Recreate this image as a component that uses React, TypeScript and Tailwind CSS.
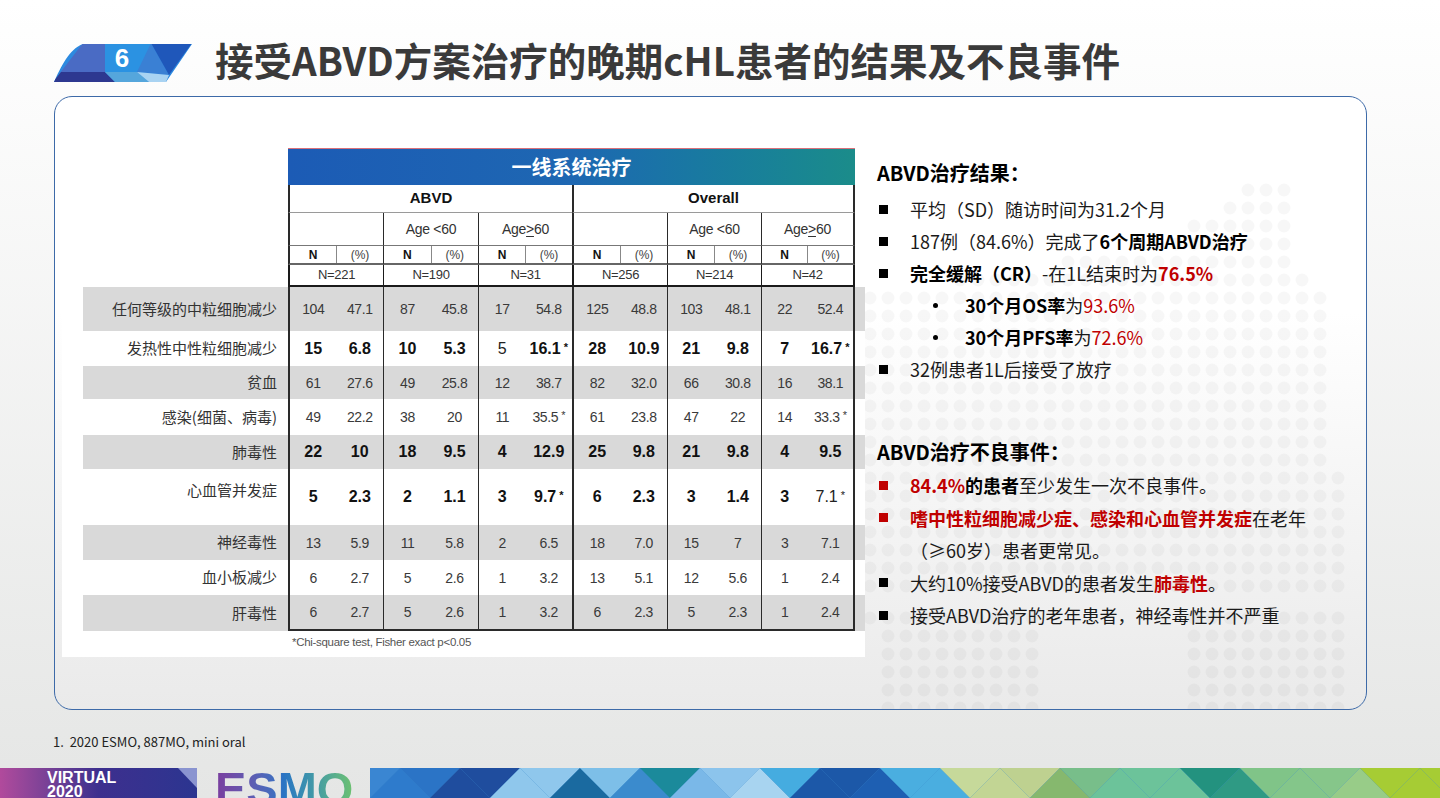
import React from 'react';

type Row = {
  label: string;
  gray: boolean;
  bold: boolean;
  h: string;
  top?: boolean;
  v: [string, string][];
};

const cjk = "font-['Noto_Sans_CJK_SC',sans-serif]";
const arial = "font-['Liberation_Sans',Arial,sans-serif]";

const rows: Row[] = [
  { label: '任何等级的中粒细胞减少', gray: true, bold: false, h: 'h-[44px]', v: [['104', '47.1'], ['87', '45.8'], ['17', '54.8'], ['125', '48.8'], ['103', '48.1'], ['22', '52.4']] },
  { label: '发热性中性粒细胞减少', gray: false, bold: true, h: 'h-[35px]', v: [['15', '6.8'], ['10', '5.3'], ['!5', '16.1*'], ['28', '10.9'], ['21', '9.8'], ['7', '16.7*']] },
  { label: '贫血', gray: true, bold: false, h: 'h-[33px]', v: [['61', '27.6'], ['49', '25.8'], ['12', '38.7'], ['82', '32.0'], ['66', '30.8'], ['16', '38.1']] },
  { label: '感染(细菌、病毒)', gray: false, bold: false, h: 'h-[36px]', v: [['49', '22.2'], ['38', '20'], ['11', '35.5*'], ['61', '23.8'], ['47', '22'], ['14', '33.3*']] },
  { label: '肺毒性', gray: true, bold: true, h: 'h-[34px]', v: [['22', '10'], ['18', '9.5'], ['4', '12.9'], ['25', '9.8'], ['21', '9.8'], ['4', '9.5']] },
  { label: '心血管并发症', gray: false, bold: true, h: 'h-[56px]', top: true, v: [['5', '2.3'], ['2', '1.1'], ['3', '9.7*'], ['6', '2.3'], ['3', '1.4'], ['3', '!7.1*']] },
  { label: '神经毒性', gray: true, bold: false, h: 'h-[35px]', v: [['13', '5.9'], ['11', '5.8'], ['2', '6.5'], ['18', '7.0'], ['15', '7'], ['3', '7.1']] },
  { label: '血小板减少', gray: false, bold: false, h: 'h-[35px]', v: [['6', '2.7'], ['5', '2.6'], ['1', '3.2'], ['13', '5.1'], ['12', '5.6'], ['1', '2.4']] },
  { label: '肝毒性', gray: true, bold: false, h: 'h-[36px]', v: [['6', '2.7'], ['5', '2.6'], ['1', '3.2'], ['6', '2.3'], ['5', '2.3'], ['1', '2.4']] },
];

// widths of the six sub-groups, with their left / right rules
const subW = [
  'w-[95px] border-l-2',
  'w-[95px] border-l',
  'w-[94px] border-l',
  'w-[95px] border-l-2',
  'w-[94px] border-l',
  'w-[94px] border-l border-r-2',
];

const nLabels = ['N=221', 'N=190', 'N=31', 'N=256', 'N=214', 'N=42'];

const stripeColors = [
  '#3a86d2', '#2e7bcc', '#2b74c6', '#1f4d9e', '#1f4d9e', '#8fc7ec', '#8fc7ec', '#1a6aa0',
  '#7dbfe8', '#3b8bcd', '#1b8a9b', '#7ab8e8', '#8cc4ec', '#a8d4f0', '#45ace0', '#1c58a8',
  '#1c58a8', '#1e5fb2', '#4aaee0', '#4aaee0', '#c6d99a', '#c2d594', '#bed190', '#86b86e',
  '#78be8a', '#6cc39a', '#6cc39a', '#6cc39a', '#23927f', '#2f9a84', '#80c488', '#84c68a',
  '#86c68a', '#98cc88', '#a6cc34', '#a6cc34', '#a6cc34', '#a6cc34',
];

function dotRanges(): [number, [number, number][]][] {
  const out: [number, [number, number][]][] = [
    [190, [[1240, 1290]]],
    [208, [[1222, 1290]]],
    [226, [[1186, 1290]]],
    [244, [[1150, 1300]]],
    [262, [[1060, 1300]]],
    [280, [[960, 1305]]],
  ];
  for (let y = 298; y <= 460; y += 18) out.push([y, [[866, 1325]]]);
  for (let y = 478; y <= 600; y += 18) out.push([y, [[866, 1345]]]);
  out.push([618, [[866, 1040], [1180, 1345]]]);
  for (let y = 636; y <= 708; y += 18) out.push([y, [[886, 1040], [1190, 1340]]]);
  return out;
}

function Dots() {
  const circles: React.ReactNode[] = [];
  dotRanges().forEach(([y, ranges]) => {
    ranges.forEach(([a, b]) => {
      for (let x = 870; x <= 1360; x += 18) {
        if (x >= a && x <= b) circles.push(<circle key={`${x}-${y}`} cx={x} cy={y} r={6.5} />);
      }
    });
  });
  return (
    <svg className="pointer-events-none absolute inset-0 h-full w-full">
      <g transform="translate(-55 -97)" fill="#000" fillOpacity={0.032}>
        {circles}
      </g>
    </svg>
  );
}

function Badge() {
  return (
    <div className="relative h-[39px] w-[140px] shrink-0">
      <svg width="140" height="39" viewBox="0 0 140 39">
        <defs>
          <clipPath id="badge">
            <path d="M1 39 C8 24 16 6 30 1 L139 1 L113 39 Z" />
          </clipPath>
        </defs>
        <g clipPath="url(#badge)">
          <rect width="140" height="39" fill="#2d8ae0" />
          <polygon points="0,39 30,0 62,0 52,29 8,29" fill="#4a6bc4" />
          <polygon points="0,39 8,29 52,29 62,39" fill="#2d3890" />
          <polygon points="52,0 100,0 84,29 52,29" fill="#2b92e2" />
          <polygon points="52,29 84,29 96,39 62,39" fill="#55a6dc" />
          <polygon points="98,0 116,32 84,29" fill="#3a80d4" />
          <polygon points="98,0 139,0 116,32" fill="#1f57ba" />
          <polygon points="84,29 116,32 113,39 96,39" fill="#a9d3f2" />
        </g>
      </svg>
      <span className={`absolute left-[56px] top-0 h-[30px] w-[26px] text-center text-[26px] font-bold leading-[30px] text-white ${arial}`}>
        6
      </span>
    </div>
  );
}

function Val({ s, bold }: { s: string; bold: boolean }) {
  const light = s.startsWith('!');
  const t = s.replace('!', '');
  const star = t.endsWith('*');
  const num = star ? t.slice(0, -1) : t;
  const cls = bold
    ? light
      ? 'text-[16px] text-[#222]'
      : 'text-[16px] font-bold text-[#111]'
    : 'text-[14px] tracking-[-0.4px] text-[#3a3a3a]';
  return (
    <span className={cls}>
      {num}
      {star && <span className="ml-[3px] align-[3px] text-[11px]">*</span>}
    </span>
  );
}

function AgeGe() {
  return (
    <>
      {'Age '}
      <span className="underline underline-offset-[2px]">&gt;</span>
      {'60'}
    </>
  );
}

function ResultTable() {
  return (
    <div className="relative ml-[7px] mt-[43px] h-[517px] w-[803px] shrink-0 bg-white pt-[8px]">
      <div className={`ml-[21px] ${arial}`}>
        {/* title bar */}
        <div
          className={`ml-[205px] flex h-[37px] w-[567px] items-center justify-center border-t border-[#d9707a] bg-linear-to-r from-[#1c5bb5] via-[#1e67b2] to-[#1b8c8a] text-[20px] font-bold text-white ${cjk}`}
        >
          一线系统治疗
        </div>

        {/* ABVD / Overall */}
        <div className="flex h-[28px]">
          <div className="w-[205px]" />
          <div className="flex w-[284px] items-center justify-center border-b border-l-2 border-[#2a2a2a] border-b-[#9a9a9a] text-[15px] font-bold text-[#111]">
            ABVD
          </div>
          <div className="flex w-[283px] items-center justify-center border-x-2 border-b border-[#2a2a2a] border-b-[#9a9a9a] text-[15px] font-bold text-[#111]">
            Overall
          </div>
        </div>

        {/* age */}
        <div className="flex h-[33px]">
          <div className="w-[205px]" />
          {subW.map((w, i) => (
            <div
              key={i}
              className={`${w} flex items-center justify-center border-b border-[#2a2a2a] border-b-[#777] text-[14px] tracking-[-0.3px] text-[#333]`}
            >
              {i === 1 || i === 4 ? 'Age <60' : i === 2 || i === 5 ? <AgeGe /> : ''}
            </div>
          ))}
        </div>

        {/* N (%) */}
        <div className="flex h-[19px]">
          <div className="w-[205px]" />
          {subW.map((w, i) => (
            <div key={i} className={`${w} flex border-b-2 border-[#2a2a2a] border-b-[#666]`}>
              <div className="flex flex-1 items-center justify-center text-[12px] font-bold text-[#111]">N</div>
              <div className="flex flex-1 items-center justify-center border-l border-[#888] text-[12px] text-[#444]">(%)</div>
            </div>
          ))}
        </div>

        {/* N= */}
        <div className="flex h-[22px]">
          <div className="w-[205px]" />
          {subW.map((w, i) => (
            <div
              key={i}
              className={`${w} flex items-center justify-center border-b-2 border-[#1a1a1a] text-[13px] tracking-[-0.3px] text-[#333]`}
            >
              {nLabels[i]}
            </div>
          ))}
        </div>

        {/* data */}
        {rows.map((r, ri) => {
          const last = ri === rows.length - 1;
          return (
            <div key={r.label} className={`flex ${r.h} ${r.gray ? 'bg-[#d9d9d9]' : ''}`}>
              <div
                className={`flex w-[205px] justify-end pr-[11px] text-[15px] text-[#333] ${cjk} ${
                  r.top ? 'items-start pt-[10px]' : 'items-center'
                }`}
              >
                {r.label}
              </div>
              {r.v.map((pair, i) => (
                <div
                  key={i}
                  className={`${subW[i]} flex items-center border-[#2a2a2a] ${last ? 'border-b-2' : ''}`}
                >
                  <div className="flex-1 text-center">
                    <Val s={pair[0]} bold={r.bold} />
                  </div>
                  <div className="flex-1 text-center">
                    <Val s={pair[1]} bold={r.bold} />
                  </div>
                </div>
              ))}
            </div>
          );
        })}

        <div className="mt-[3px] pl-[209px] text-[11.5px] leading-[16px] tracking-[-0.3px] text-[#555]">
          *Chi-square test, Fisher exact p&lt;0.05
        </div>
      </div>
    </div>
  );
}

function Bullet({ red, lh, children }: { red?: boolean; lh: string; children: React.ReactNode }) {
  return (
    <li className="flex">
      <span className={`flex w-[33px] shrink-0 items-center ${lh}`}>
        <span className={`ml-[2px] h-[9px] w-[9px] ${red ? 'bg-[#c00000]' : 'bg-black'}`} />
      </span>
      <span>{children}</span>
    </li>
  );
}

function Sub({ children }: { children: React.ReactNode }) {
  return (
    <li className="flex pl-[56px]">
      <span className="flex h-[32px] w-[32px] shrink-0 items-center">
        <span className="h-[5px] w-[5px] rounded-full bg-black" />
      </span>
      <span>{children}</span>
    </li>
  );
}

const B = ({ children }: { children: React.ReactNode }) => <span className="font-bold text-black">{children}</span>;
const Red = ({ children, bold }: { children: React.ReactNode; bold?: boolean }) => (
  <span className={`text-[#c00000] ${bold ? 'font-bold' : ''}`}>{children}</span>
);

function Notes() {
  return (
    <div className="relative ml-[12px] mt-[62px] text-[18px] text-[#1a1a1a]">
      <div className="text-[20px] font-bold leading-[28px] text-black">ABVD治疗结果：</div>
      <ul className="mt-[6px] leading-[32px]">
        <Bullet lh="h-[32px]">平均（SD）随访时间为31.2个月</Bullet>
        <Bullet lh="h-[32px]">
          187例（84.6%）完成了<B>6个周期ABVD治疗</B>
        </Bullet>
        <Bullet lh="h-[32px]">
          <B>完全缓解（CR）</B>-在1L结束时为<Red bold>76.5%</Red>
        </Bullet>
        <Sub>
          <B>30个月OS率</B>为<Red>93.6%</Red>
        </Sub>
        <Sub>
          <B>30个月PFS率</B>为<Red>72.6%</Red>
        </Sub>
        <Bullet lh="h-[32px]">32例患者1L后接受了放疗</Bullet>
      </ul>

      <div className="mt-[53px] text-[20px] font-bold leading-[28px] text-black">ABVD治疗不良事件：</div>
      <ul className="mt-[3px] leading-[32.5px]">
        <Bullet red lh="h-[32.5px]">
          <Red bold>84.4%</Red>
          <B>的患者</B>至少发生一次不良事件。
        </Bullet>
        <Bullet red lh="h-[32.5px]">
          <Red bold>嗜中性粒细胞减少症、感染和心血管并发症</Red>在老年
          <br />
          （≥60岁）患者更常见。
        </Bullet>
        <Bullet lh="h-[32.5px]">
          大约10%接受ABVD的患者发生<Red bold>肺毒性</Red>。
        </Bullet>
        <Bullet lh="h-[32.5px]">接受ABVD治疗的老年患者，神经毒性并不严重</Bullet>
      </ul>
    </div>
  );
}

function Banner() {
  return (
    <div className="flex h-[30px] shrink-0 overflow-hidden">
      <div className="relative w-[197px] shrink-0 bg-linear-to-r from-[#b14a9c] via-[#3d2f8e] to-[#2b3590]">
        <svg className="absolute right-0 top-0" width="20" height="30" viewBox="0 0 20 30">
          <polygon points="1,0 20,0 20,20" fill="#8a94d0" />
        </svg>
        <div className={`pl-[47px] pt-[3px] text-[16px] font-bold leading-[14px] text-white ${arial}`}>
          VIRTUAL
          <br />
          2020
        </div>
      </div>
      <div className="w-[18px] shrink-0" />
      <div
        className={`-mt-[3px] w-[137px] shrink-0 bg-linear-to-r from-[#7a3c9e] via-[#2a74c4] to-[#6cc070] bg-clip-text text-[47px] font-bold leading-none text-transparent ${arial}`}
      >
        ESMO
      </div>
      <div className="w-[18px] shrink-0" />
      <svg className="flex-1" height="30" viewBox="0 0 1070 30" preserveAspectRatio="none">
        <rect width="1070" height="30" fill="#3a8acd" />
        {stripeColors.map((c, i) => {
          const x0 = -30 + i * 30;
          const pts =
            i % 2 === 0
              ? `${x0},0 ${x0 + 60},0 ${x0 + 30},30`
              : `${x0},30 ${x0 + 60},30 ${x0 + 30},0`;
          return <polygon key={i} points={pts} fill={c} />;
        })}
      </svg>
    </div>
  );
}

export default function App() {
  return (
    <div className={`flex h-[798px] w-[1440px] flex-col overflow-hidden bg-linear-to-b from-white to-[#e5e6e5] ${cjk}`}>
      {/* Header */}
      <div className="flex h-[96px] shrink-0 items-start pl-[53px] pt-[37px]">
        <div className="mt-[6px]">
          <Badge />
        </div>
        <h1 className="ml-[22px] text-[38.5px] font-bold leading-[44px] text-[#3a3a3a]">
          接受ABVD方案治疗的晚期cHL患者的结果及不良事件
        </h1>
      </div>

      {/* Card */}
      <div className="relative mx-[54px] flex h-[614px] w-[1313px] shrink-0 items-start overflow-hidden rounded-[18px] border-[1.5px] border-[#3d6aa8] bg-linear-to-b from-white from-35% to-[#eaeaea]">
        <Dots />
        <ResultTable />
        <Notes />
      </div>

      {/* Footnote */}
      <div className="mt-[23px] h-[18px] shrink-0 pl-[53px] text-[13px] leading-[18px] text-[#222]">
        1.&nbsp;&nbsp;2020 ESMO, 887MO, mini oral
      </div>

      <div className="mt-[17px]">
        <Banner />
      </div>
    </div>
  );
}
